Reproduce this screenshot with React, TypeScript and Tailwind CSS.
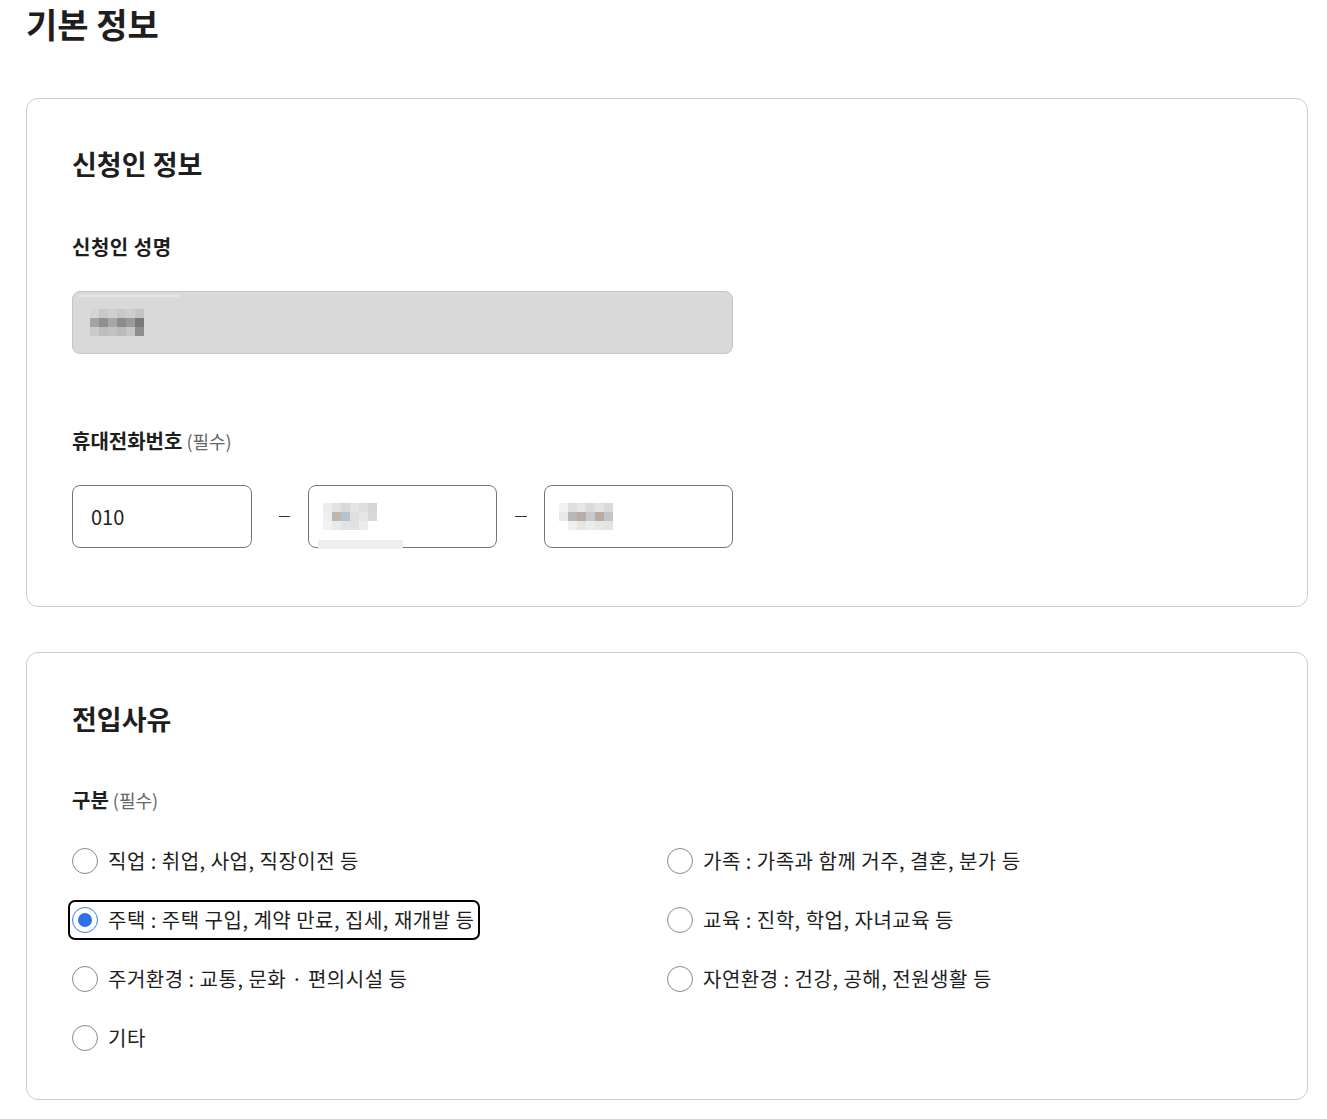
import React from "react";

const reasons = [
  { id: "job", label: "직업 : 취업, 사업, 직장이전 등" },
  { id: "family", label: "가족 : 가족과 함께 거주, 결혼, 분가 등" },
  { id: "house", label: "주택 : 주택 구입, 계약 만료, 집세, 재개발 등" },
  { id: "edu", label: "교육 : 진학, 학업, 자녀교육 등" },
  { id: "env", label: "주거환경 : 교통, 문화 · 편의시설 등" },
  { id: "nature", label: "자연환경 : 건강, 공해, 전원생활 등" },
  { id: "etc", label: "기타" },
];

// blurred (redacted) text, drawn as a small mosaic
function Mosaic({ cells }: { cells: string[][] }) {
  return (
    <div className="flex flex-col">
      {cells.map((row, i) => (
        <div key={i} className="flex">
          {row.map((c, j) => (
            <div key={j} className="h-[9px] w-[9px]" style={{ background: c }} />
          ))}
        </div>
      ))}
    </div>
  );
}

const nameCells = [
  ["#d4d4d4", "#c9c9c9", "#cfcfcf", "#c8c8c8", "#cdcdcd", "#c4c4c4"],
  ["#a3a3a3", "#8f8f8f", "#a8a8a8", "#8a8c90", "#9a9a9a", "#7a7a7a"],
  ["#cacaca", "#bdbdbd", "#c2c2c2", "#bbbbbb", "#c6c6c6", "#8e8e8e"],
];
const phoneCells1 = [
  ["#ececec", "#e2e2e2", "#d6d8dc", "#e4e4e4", "#dedede", "#d3d5d9"],
  ["#eeeeee", "#bfb6ae", "#b7c2cc", "#e0dfe0", "#e6e6e6", "#d7d8dc"],
  ["#f1f1f1", "#e9e9e9", "#e3e3e3", "#e1e1e1", "#ececec", "#ffffff"],
];
const phoneCells2 = [
  ["#f1f1f1", "#dedede", "#e6e6e6", "#dadada", "#e3e3e3", "#d8dadd"],
  ["#e8e8e8", "#b8b8bb", "#b8ada6", "#c6c8cc", "#b6aca4", "#c0c6cc"],
  ["#ffffff", "#efefef", "#e5e5e5", "#ebebeb", "#e7e7e7", "#e3e3e3"],
];

function Radio({ checked }: { checked?: boolean }) {
  return checked ? (
    <span className="flex h-[26px] w-[26px] shrink-0 items-center justify-center rounded-full border-[1.5px] border-[#3b7de9] bg-white">
      <span className="h-[14px] w-[14px] rounded-full bg-[#2f6fe4]" />
    </span>
  ) : (
    <span className="h-[26px] w-[26px] shrink-0 rounded-full border-[1.5px] border-[#8a8a8a] bg-white" />
  );
}

export default function App() {
  return (
    <div
      className="min-h-screen bg-white px-[26px] pb-[20px] text-[#1e1e1e]"
      style={{ fontFamily: '"Noto Sans CJK KR", "Noto Sans", sans-serif' }}
    >
      <h1 className="text-[34px] font-bold leading-[48px]">기본 정보</h1>

      {/* 신청인 정보 */}
      <section className="mt-[50px] w-[1282px] rounded-[12px] border border-[#cccccc] px-[45px] pb-[58px] pt-[47px]">
        <h2 className="text-[27px] font-bold leading-[36px]">신청인 정보</h2>

        <div className="mt-[50px] text-[20px] font-bold leading-[30px] tracking-[0.5px]">신청인 성명</div>
        <div className="relative mt-[29px] flex h-[63px] w-[661px] items-center rounded-[8px] border border-[#c4c4c4] bg-[#d9d9d9] pl-[17px]">
          <div className="absolute left-[6px] top-[3px] h-[2px] w-[100px] bg-[#e6e6e6]" />
          <Mosaic cells={nameCells} />
        </div>

        <div className="mt-[72px] flex items-baseline gap-[4px] leading-[30px]">
          <span className="text-[20px] font-bold">휴대전화번호</span>
          <span className="text-[18px] text-[#666666]">(필수)</span>
        </div>
        <div className="mt-[29px] flex items-center">
          <div className="flex h-[63px] w-[180px] items-center rounded-[8px] border border-[#767676] bg-white pl-[18px] text-[20px]">
            010
          </div>
          <span className="ml-[27px] mr-[18px] h-[1.5px] w-[11px] bg-[#333333]" />
          <div className="relative flex h-[63px] w-[189px] items-center rounded-[8px] border border-[#767676] bg-white pl-[14px]">
            <Mosaic cells={phoneCells1} />
            <div className="absolute bottom-[-2px] left-[9px] h-[9px] w-[85px] bg-[#eeeeee]" />
          </div>
          <span className="ml-[18px] mr-[17px] h-[1.5px] w-[12px] bg-[#333333]" />
          <div className="flex h-[63px] w-[189px] items-center rounded-[8px] border border-[#767676] bg-white pl-[14px]">
            <Mosaic cells={phoneCells2} />
          </div>
        </div>
      </section>

      {/* 전입사유 */}
      <section className="mt-[45px] w-[1282px] rounded-[12px] border border-[#cccccc] px-[45px] pb-[45px] pt-[48px]">
        <h2 className="text-[27px] font-bold leading-[36px]">전입사유</h2>

        <div className="mt-[48px] flex items-baseline gap-[4px] leading-[30px]">
          <span className="text-[20px] font-bold">구분</span>
          <span className="text-[18px] text-[#666666]">(필수)</span>
        </div>

        <div className="mt-[30px] grid grid-cols-2 gap-y-[27px]">
          {reasons.map((r) => {
            const focused = r.id === "house";
            return (
              <div key={r.id} className="flex">
                <label
                  className={
                    focused
                      ? "inline-flex h-[32px] items-center gap-[10px] rounded-[3px] pr-[2px] outline-2 outline-offset-2 outline-black"
                      : "inline-flex h-[32px] items-center gap-[10px]"
                  }
                >
                  <Radio checked={focused} />
                  <span className="text-[20px] leading-[32px] tracking-[0.5px]">{r.label}</span>
                </label>
              </div>
            );
          })}
        </div>
      </section>
    </div>
  );
}
